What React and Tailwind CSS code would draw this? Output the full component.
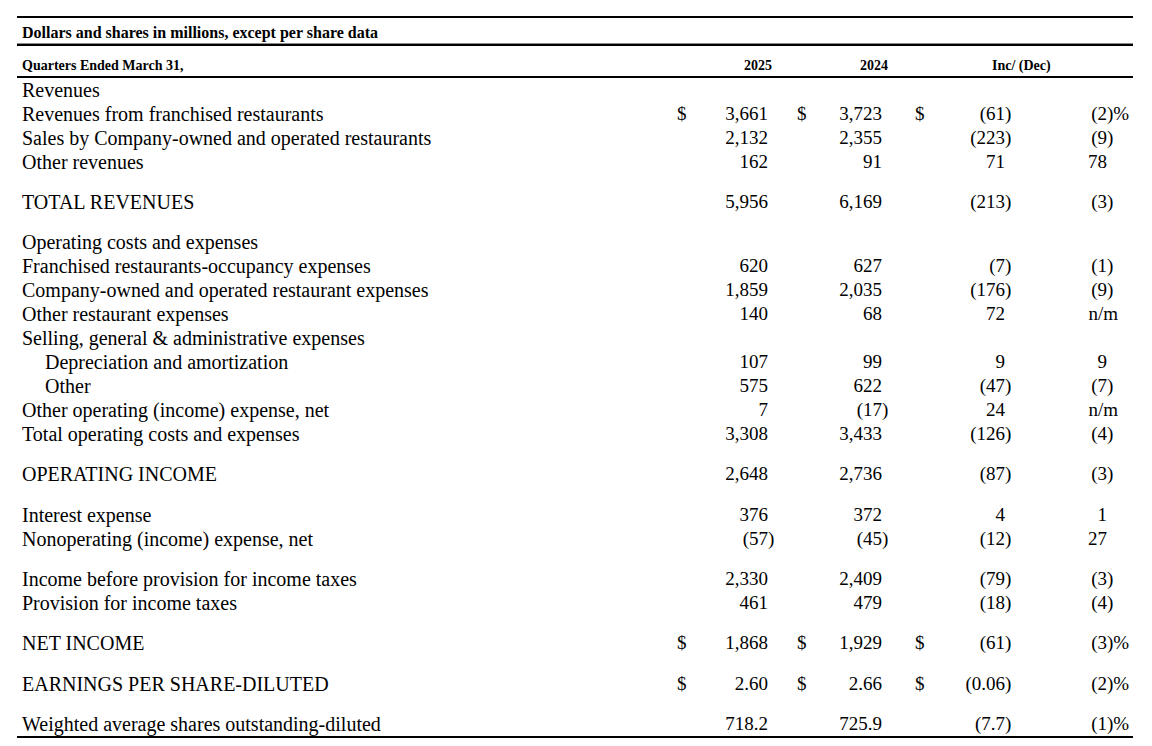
import React from 'react';

const rows = [
  { label: 'Revenues' },
  { label: 'Revenues from franchised restaurants', d: true, a: '3,661', b: '3,723', c: '(61)', p: '(2)%' },
  { label: 'Sales by Company-owned and operated restaurants', a: '2,132', b: '2,355', c: '(223)', p: '(9)' },
  { label: 'Other revenues', a: '162', b: '91', c: '71', p: '78' },
  { gap: 'h-[16px]' },
  { label: 'TOTAL REVENUES', a: '5,956', b: '6,169', c: '(213)', p: '(3)' },
  { gap: 'h-[16px]' },
  { label: 'Operating costs and expenses' },
  { label: 'Franchised restaurants-occupancy expenses', a: '620', b: '627', c: '(7)', p: '(1)' },
  { label: 'Company-owned and operated restaurant expenses', a: '1,859', b: '2,035', c: '(176)', p: '(9)' },
  { label: 'Other restaurant expenses', a: '140', b: '68', c: '72', p: 'n/m' },
  { label: 'Selling, general & administrative expenses' },
  { label: 'Depreciation and amortization', indent: true, a: '107', b: '99', c: '9', p: '9' },
  { label: 'Other', indent: true, a: '575', b: '622', c: '(47)', p: '(7)' },
  { label: 'Other operating (income) expense, net', a: '7', b: '(17)', c: '24', p: 'n/m' },
  { label: 'Total operating costs and expenses', a: '3,308', b: '3,433', c: '(126)', p: '(4)' },
  { gap: 'h-[16px]' },
  { label: 'OPERATING INCOME', a: '2,648', b: '2,736', c: '(87)', p: '(3)' },
  { gap: 'h-[17px]' },
  { label: 'Interest expense', a: '376', b: '372', c: '4', p: '1' },
  { label: 'Nonoperating (income) expense, net', a: '(57)', b: '(45)', c: '(12)', p: '27' },
  { gap: 'h-[16px]' },
  { label: 'Income before provision for income taxes', a: '2,330', b: '2,409', c: '(79)', p: '(3)' },
  { label: 'Provision for income taxes', a: '461', b: '479', c: '(18)', p: '(4)' },
  { gap: 'h-[16px]' },
  { label: 'NET INCOME', d: true, a: '1,868', b: '1,929', c: '(61)', p: '(3)%' },
  { gap: 'h-[17px]' },
  { label: 'EARNINGS PER SHARE-DILUTED', d: true, a: '2.60', b: '2.66', c: '(0.06)', p: '(2)%' },
  { gap: 'h-[16px]' },
  { label: 'Weighted average shares outstanding-diluted', a: '718.2', b: '725.9', c: '(7.7)', p: '(1)%' },
];

const cols = 'grid grid-cols-[660px_20px_77px_43px_71px_47px_77px_121px]';

// split trailing ")" so digits line up and the paren hangs
function Num({ v, trail = 'w-[6px]' }) {
  if (!v) return <div />;
  const hang = v.endsWith(')') ? ')' : '';
  const main = hang ? v.slice(0, -1) : v;
  return (
    <div className="flex justify-end">
      <span>{main}</span>
      <span className={`${trail} text-left`}>{hang}</span>
    </div>
  );
}

function Pct({ v }) {
  if (!v) return <div />;
  if (v === 'n/m') {
    return (
      <div className="flex justify-end">
        <span className="mr-[-11px]">n/m</span>
        <span className="w-[26px]" />
      </div>
    );
  }
  let main = v;
  let hang = '';
  if (v.endsWith(')%')) {
    main = v.slice(0, -2);
    hang = ')%';
  } else if (v.endsWith(')')) {
    main = v.slice(0, -1);
    hang = ')';
  }
  return (
    <div className="flex justify-end">
      <span>{main}</span>
      <span className="w-[26px] text-left">{hang}</span>
    </div>
  );
}

export default function App() {
  return (
    <div className="bg-white min-h-[746px] w-[1152px] pt-[16px] text-black font-['Liberation_Serif',serif]">
      <div className="ml-[17px] w-[1116px]">
        <div className="h-[2px] bg-black" />
        {/* unit note */}
        <div className="h-[25px] pt-[6px] pl-[5px] text-[16px] leading-[18px] font-bold">
          Dollars and shares in millions, except per share data
        </div>
        <div className="h-[1px] bg-[#8a8a8a]" />
        <div className="h-[2px] bg-black" />

        {/* column headers */}
        <div className={`${cols} h-[30px] items-end pb-[2px] text-[14px] leading-[16px] font-bold`}>
          <div className="pl-[5px]">Quarters Ended March 31,</div>
          <div />
          <div className="text-right pr-[2px]">2025</div>
          <div />
          <div className="text-right">2024</div>
          <div />
          <div className="col-span-2 pl-[57px]">Inc/ (Dec)</div>
        </div>
        <div className="h-[2px] bg-black" />

        <div className="text-[19px] leading-[24px]">
          {rows.map((r, i) =>
            r.gap ? (
              <div key={i} className={r.gap} />
            ) : (
              <div key={i} className={`${cols} h-[24px] whitespace-nowrap`}>
                <div className={`${r.indent ? 'pl-[28px]' : 'pl-[5px]'} text-[20px]`}>{r.label}</div>
                <div>{r.d ? '$' : ''}</div>
                <Num v={r.a} />
                <div className="pl-[23px]">{r.d ? '$' : ''}</div>
                <Num v={r.b} />
                <div className="pl-[27px]">{r.d ? '$' : ''}</div>
                <Num v={r.c} trail="w-[7px]" />
                <Pct v={r.p} />
              </div>
            )
          )}
        </div>
        <div className="h-[2px] bg-black" />
      </div>
    </div>
  );
}
